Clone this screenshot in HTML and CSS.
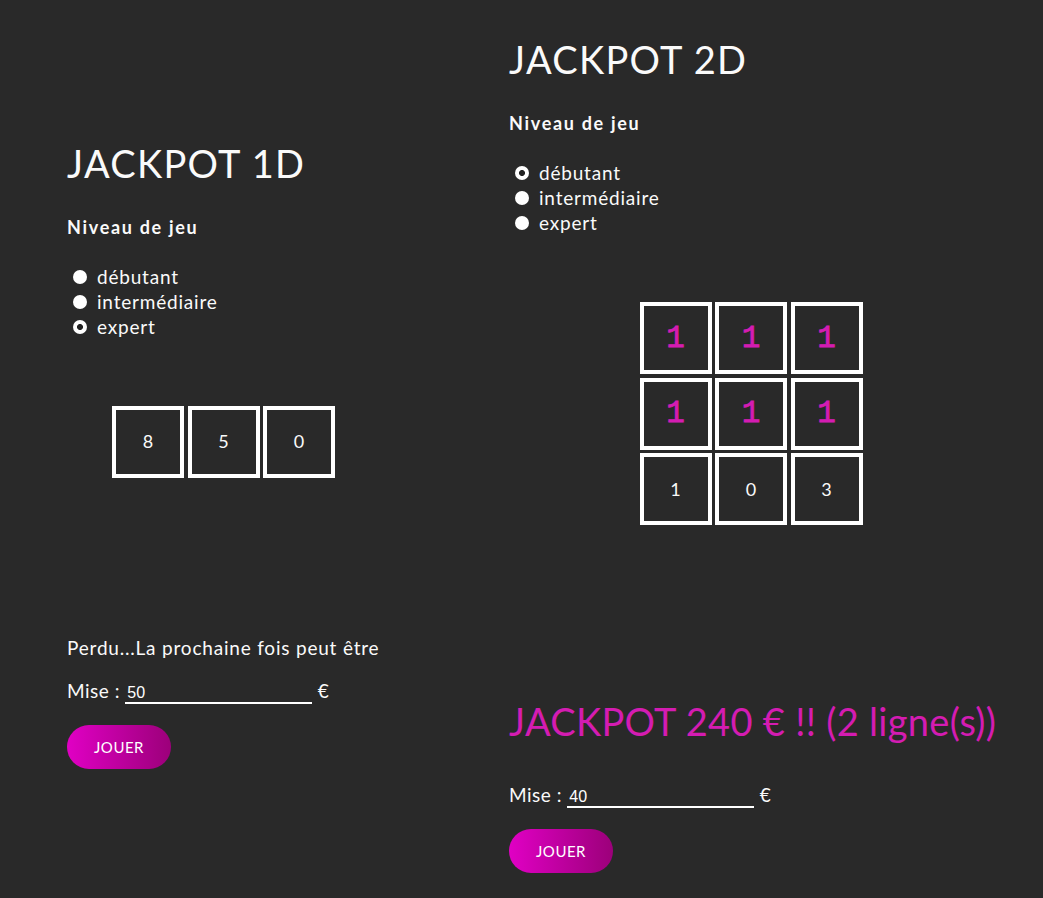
FILE: index.html
```html
<!DOCTYPE html>
<html lang="fr">
<head>
    <meta charset="UTF-8">
    <meta name="viewport" content="width=device-width, initial-scale=1.0">
    <title>Jackpot</title>
    <link rel="stylesheet" href="styles.css">
</head>
<body>
    <main class="page">
        <section class="game game-1d">
            <h1 class="game-title">JACKPOT 1D</h1>
            <h2 class="level-title">Niveau de jeu</h2>
            <div class="levels">
                <label><input type="radio" name="level1d" value="1"> débutant</label>
                <label><input type="radio" name="level1d" value="2"> intermédiaire</label>
                <label><input type="radio" name="level1d" value="3" checked> expert</label>
            </div>

            <div class="board board-1d">
                <div class="cell">8</div>
                <div class="cell">5</div>
                <div class="cell">0</div>
            </div>

            <p class="result">Perdu...La prochaine fois peut être</p>
            <div class="bet">
                Mise : <input type="text" class="bet-input" value="50"> €
            </div>
            <button class="play-button">Jouer</button>
        </section>

        <section class="game game-2d">
            <h1 class="game-title">JACKPOT 2D</h1>
            <h2 class="level-title">Niveau de jeu</h2>
            <div class="levels">
                <label><input type="radio" name="level2d" value="1" checked> débutant</label>
                <label><input type="radio" name="level2d" value="2"> intermédiaire</label>
                <label><input type="radio" name="level2d" value="3"> expert</label>
            </div>

            <div class="board board-2d">
                <div class="cell win">1</div>
                <div class="cell win">1</div>
                <div class="cell win">1</div>
                <div class="cell win">1</div>
                <div class="cell win">1</div>
                <div class="cell win">1</div>
                <div class="cell">1</div>
                <div class="cell">0</div>
                <div class="cell">3</div>
            </div>

            <p class="result jackpot">JACKPOT 240 € !! (2 ligne(s))</p>
            <div class="bet">
                Mise : <input type="text" class="bet-input" value="40"> €
            </div>
            <button class="play-button">Jouer</button>
        </section>
    </main>
</body>
</html>
```

FILE: styles.css
```css
:root {
    --bg: #292929;
    --text: #fafafa;
    --pink: #d41cb2;
}

* {
    margin: 0;
    padding: 0;
    box-sizing: border-box;
}

body {
    background-color: var(--bg);
    color: var(--text);
    font-family: "Lato", "Open Sans", sans-serif;
    line-height: 1.2;
}

.page {
    display: flex;
    align-items: center;
    min-height: 100vh;
    padding: 12px 0 0 67px;
}

.game-1d {
    width: 442px;
}

.game-2d {
    width: 484px;
}

.game-title {
    font-size: 38px;
    font-weight: 400;
    letter-spacing: 1.3px;
}

.level-title {
    margin-top: 30px;
    font-size: 18px;
    font-weight: 700;
    letter-spacing: 1.7px;
}

.levels {
    margin-top: 26px;
    font-size: 19px;
    line-height: 25px;
    letter-spacing: 0.8px;
}

.levels label {
    display: flex;
    align-items: center;
}

.levels input {
    appearance: none;
    width: 14px;
    height: 14px;
    margin: 0 10px 0 6px;
    border-radius: 50%;
    background: #fff;
}

.levels input:checked {
    background: radial-gradient(circle, #222 0 2.6px, #fff 3.4px);
}

.board {
    display: grid;
    grid-template-columns: repeat(3, 72px);
    gap: 3.5px;
    margin-top: 67px;
}

.board-1d {
    margin-left: 45px;
}

.board-2d {
    justify-content: center;
}

.cell {
    height: 72px;
    border: 4px solid #fff;
    display: flex;
    align-items: center;
    justify-content: center;
    font-size: 18px;
}

.cell.win {
    color: var(--pink);
    font-family: "Liberation Mono", monospace;
    font-size: 31px;
    font-weight: 400;
    -webkit-text-stroke: 0.8px var(--pink);
}

.result {
    margin-top: 159px;
    font-size: 19px;
    letter-spacing: 0.8px;
    white-space: nowrap;
}

.result.jackpot {
    margin-top: 174px;
    color: var(--pink);
    font-size: 38px;
    letter-spacing: 0.3px;
}

.bet {
    margin-top: 20px;
    font-size: 19px;
    letter-spacing: 0.5px;
}

.jackpot + .bet {
    margin-top: 39px;
}

.bet-input {
    width: 187px;
    height: 20px;
    background: transparent;
    border: none;
    border-bottom: 2px solid #fff;
    color: #fff;
    font-family: "Liberation Sans", Arial, sans-serif;
    font-size: 16px;
    letter-spacing: 0;
    padding: 0 2px;
    outline: none;
    vertical-align: baseline;
}

.play-button {
    display: block;
    margin-top: 21px;
    width: 104px;
    height: 44px;
    border: none;
    border-radius: 22px;
    background: linear-gradient(90deg, #e000c4, #9c007a);
    color: #fff;
    font-family: inherit;
    font-size: 15px;
    letter-spacing: 0.5px;
    text-transform: uppercase;
    cursor: pointer;
}
```
